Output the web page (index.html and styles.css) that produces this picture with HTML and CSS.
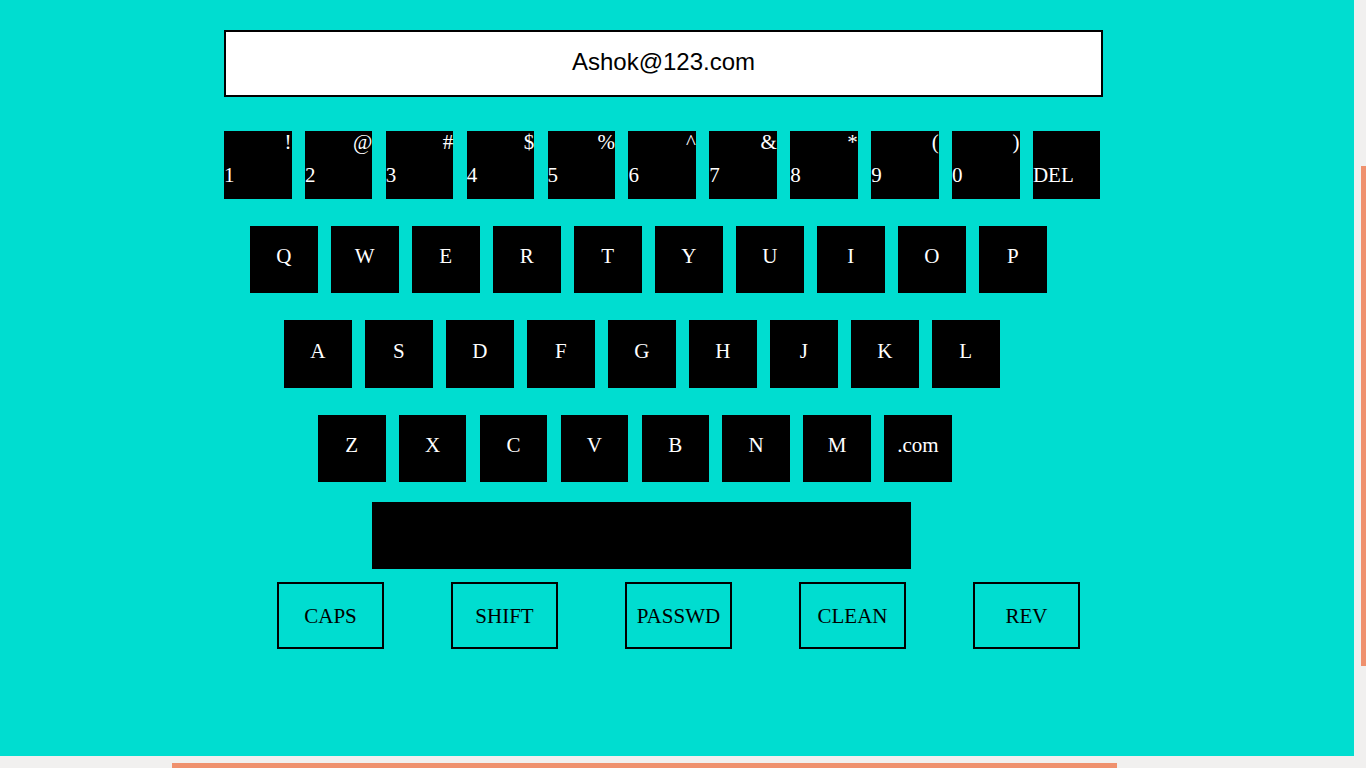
FILE: index.html
```html
<!DOCTYPE html>
<html lang="en">
<head>
<meta charset="utf-8">
<title>Virtual Keyboard</title>
<link rel="stylesheet" href="styles.css">
</head>
<body>
<div class="screen">
  <main class="page">
    <div class="display">Ashok@123.com</div>
    <div class="keyboard">
      <div class="row row-num">
        <button class="key key-num"><span class="sym">!</span><span class="num">1</span></button>
        <button class="key key-num"><span class="sym">@</span><span class="num">2</span></button>
        <button class="key key-num"><span class="sym">#</span><span class="num">3</span></button>
        <button class="key key-num"><span class="sym">$</span><span class="num">4</span></button>
        <button class="key key-num"><span class="sym">%</span><span class="num">5</span></button>
        <button class="key key-num"><span class="sym">^</span><span class="num">6</span></button>
        <button class="key key-num"><span class="sym">&amp;</span><span class="num">7</span></button>
        <button class="key key-num"><span class="sym">*</span><span class="num">8</span></button>
        <button class="key key-num"><span class="sym">(</span><span class="num">9</span></button>
        <button class="key key-num"><span class="sym">)</span><span class="num">0</span></button>
        <button class="key key-num"><span class="sym"></span><span class="num">DEL</span></button>
      </div>
      <div class="row row-top">
        <button class="key">Q</button>
        <button class="key">W</button>
        <button class="key">E</button>
        <button class="key">R</button>
        <button class="key">T</button>
        <button class="key">Y</button>
        <button class="key">U</button>
        <button class="key">I</button>
        <button class="key">O</button>
        <button class="key">P</button>
      </div>
      <div class="row row-home">
        <button class="key">A</button>
        <button class="key">S</button>
        <button class="key">D</button>
        <button class="key">F</button>
        <button class="key">G</button>
        <button class="key">H</button>
        <button class="key">J</button>
        <button class="key">K</button>
        <button class="key">L</button>
      </div>
      <div class="row row-bottom">
        <button class="key">Z</button>
        <button class="key">X</button>
        <button class="key">C</button>
        <button class="key">V</button>
        <button class="key">B</button>
        <button class="key">N</button>
        <button class="key">M</button>
        <button class="key">.com</button>
      </div>
      <div class="space-row">
        <button class="space" aria-label="space"></button>
      </div>
      <div class="actions">
        <button class="action">CAPS</button>
        <button class="action">SHIFT</button>
        <button class="action">PASSWD</button>
        <button class="action">CLEAN</button>
        <button class="action">REV</button>
      </div>
    </div>
  </main>
  <div class="vbar"><div class="vthumb"></div></div>
  <div class="hbar"><div class="hthumb"></div></div>
  <div class="corner"></div>
</div>
</body>
</html>
```

FILE: styles.css
```css
html, body {
  margin: 0;
  padding: 0;
  overflow: hidden;
}

.screen {
  display: grid;
  grid-template-columns: 1354px 12px;
  grid-template-rows: 756px 12px;
  width: 1366px;
  height: 768px;
  background: #f1f0ef;
}

.page {
  grid-column: 1;
  grid-row: 1;
  background: #00ddd0;
  padding-top: 30px;
  box-sizing: border-box;
  overflow: hidden;
}

.display {
  margin-left: 224px;
  width: 879px;
  height: 67px;
  box-sizing: border-box;
  border: 2px solid #000;
  background: #fff;
  display: flex;
  align-items: center;
  justify-content: center;
  padding-bottom: 3px;
  font-family: "Liberation Sans", Arial, sans-serif;
  font-size: 24px;
  color: #000;
}

.keyboard {
  margin-top: 34px;
  display: flex;
  flex-direction: column;
}

.row {
  display: flex;
  gap: 13.5px;
  height: 67.5px;
}

.row + .row {
  margin-top: 27px;
}

.row-num { padding-left: 224px; gap: 13.4px; }
.row-top { padding-left: 250px; }
.row-home { padding-left: 284px; }
.row-bottom { padding-left: 318px; gap: 13.4px; }

.key {
  width: 67.5px;
  height: 67.5px;
  flex: none;
  margin: 0;
  padding: 0 0 5px 0;
  border: none;
  background: #000;
  color: #fff;
  font-family: "Liberation Serif", "Times New Roman", serif;
  font-size: 21px;
  line-height: 23px;
  display: flex;
  align-items: center;
  justify-content: center;
  box-sizing: border-box;
}

.key-num {
  flex-direction: column;
  align-items: stretch;
  justify-content: flex-start;
  padding: 0;
}

.sym {
  display: block;
  height: 23px;
  text-align: right;
}

.num {
  display: block;
  margin-top: 10px;
  text-align: left;
}

.space-row {
  margin-top: 20px;
  padding-left: 372px;
  display: flex;
}

.space {
  width: 539px;
  height: 67px;
  margin: 0;
  padding: 0;
  border: none;
  background: #000;
}

.actions {
  margin-top: 13px;
  padding-left: 277px;
  display: flex;
  gap: 67px;
}

.action {
  width: 107px;
  height: 67px;
  margin: 0;
  padding: 2px 0 0 0;
  box-sizing: border-box;
  border: 2px solid #000;
  background: transparent;
  color: #000;
  font-family: "Liberation Serif", "Times New Roman", serif;
  font-size: 21px;
  line-height: 23px;
}

.vbar {
  grid-column: 2;
  grid-row: 1;
  display: flex;
  flex-direction: column;
  align-items: flex-end;
}

.vthumb {
  margin-top: 166px;
  width: 5px;
  height: 500px;
  background: #ef916e;
}

.hbar {
  grid-column: 1;
  grid-row: 2;
  display: flex;
  align-items: flex-end;
}

.hthumb {
  margin-left: 172px;
  width: 945px;
  height: 5px;
  background: #ef916e;
}

.corner {
  grid-column: 2;
  grid-row: 2;
}
```
